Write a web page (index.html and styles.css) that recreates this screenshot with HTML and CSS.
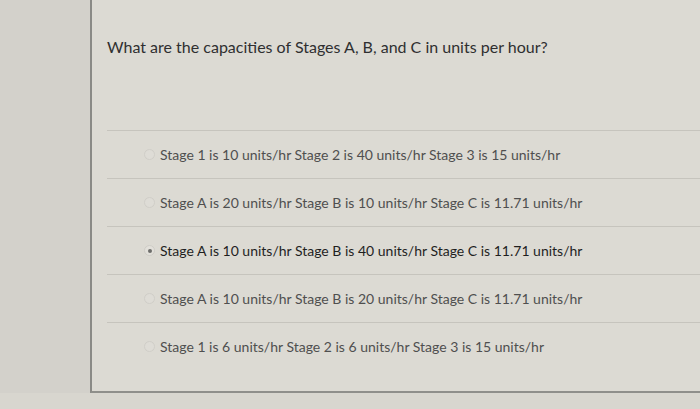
FILE: index.html
```html
<!DOCTYPE html>
<html>
<head>
<meta charset="utf-8">
<link rel="stylesheet" href="styles.css">
</head>
<body>
<div class="page">
  <div class="side"></div>
  <div class="card">
    <div class="question">What are the capacities of Stages A, B, and C in units per hour?</div>
    <div class="options">
      <label class="option"><span class="radio"></span><span class="text">Stage 1 is 10 units/hr Stage 2 is 40 units/hr Stage 3 is 15 units/hr</span></label>
      <label class="option"><span class="radio"></span><span class="text">Stage A is 20 units/hr Stage B is 10 units/hr Stage C is 11.71 units/hr</span></label>
      <label class="option selected"><span class="radio"></span><span class="text">Stage A is 10 units/hr Stage B is 40 units/hr Stage C is 11.71 units/hr</span></label>
      <label class="option"><span class="radio"></span><span class="text">Stage A is 10 units/hr Stage B is 20 units/hr Stage C is 11.71 units/hr</span></label>
      <label class="option"><span class="radio"></span><span class="text">Stage 1 is 6 units/hr Stage 2 is 6 units/hr Stage 3 is 15 units/hr</span></label>
    </div>
  </div>
</div>
</body>
</html>
```

FILE: styles.css
```css
html, body {
  margin: 0;
  padding: 0;
}
body {
  width: 700px;
  height: 409px;
  overflow: hidden;
  background: #d8d6cf;
  font-family: Lato, "Open Sans", sans-serif;
  color: #3b3b3b;
}
.page {
  display: flex;
  height: 393px;
}
.side {
  width: 90px;
  flex: none;
  background: #d3d1cb;
}
.card {
  flex: 1;
  background: #dcdad3;
  border-left: 2px solid #8a8a86;
  border-bottom: 2px solid #8f8f8b;
  padding: 35px 0 0 15px;
}
.question {
  font-size: 16px;
  color: #2f2f30;
  line-height: 24px;
}
.options {
  margin-top: 71px;
}
.option {
  display: flex;
  align-items: center;
  height: 47px;
  border-top: 1px solid #c6c4bd;
  padding-left: 37px;
  font-size: 14px;
  color: #4f4f4f;
}
.radio {
  width: 9px;
  height: 9px;
  border-radius: 50%;
  border: 1px solid #d0cec8;
  background: #dedcd6;
  margin-right: 5px;
  flex: none;
  display: flex;
  align-items: center;
  justify-content: center;
}
.option.selected .radio {
  border-color: #cfcdc7;
  background: #e2e0da;
}
.option.selected .radio::after {
  content: "";
  width: 4px;
  height: 4px;
  border-radius: 50%;
  background: #6d6d6b;
}
.option.selected .text {
  color: #1f1f1f;
}
```
